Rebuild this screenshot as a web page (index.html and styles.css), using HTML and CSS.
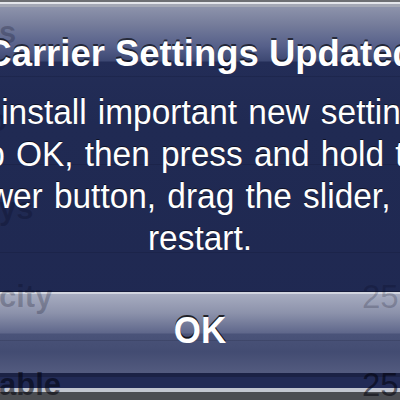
FILE: index.html
```html
<!DOCTYPE html>
<html>
<head>
<meta charset="utf-8">
<link rel="stylesheet" href="styles.css">
</head>
<body>
<div class="screen">
  <div class="topbar"></div>
  <div class="alert">
    <h1 class="title"><span>Carrier Settings Updated</span></h1>
    <p class="message"><span>To install important new settings,<br>tap OK, then press and hold the<br>power button, drag the slider, and<br>restart.</span></p>
    <div class="button"><span class="btn-label">OK</span></div>
    <div class="alert-foot"><div class="foot-line"></div></div>
  </div>
  <div class="ghost">
    <div class="row"><span class="label">s</span><span class="value"></span></div>
    <div class="row"><span class="label l2">o</span><span class="value"></span></div>
    <div class="row"><span class="label">ys</span><span class="value"></span></div>
    <div class="row"><span class="label">city</span><span class="value">25.</span></div>
    <div class="row"><span class="label dark">able</span><span class="value dark">25.</span></div>
  </div>
</div>
</body>
</html>
```
FILE: styles.css
```css
html, body {
  margin: 0;
  padding: 0;
  background: #4b4d52;
}
.screen {
  position: relative;
  width: 400px;
  height: 400px;
  overflow: hidden;
  background: #4b4d52;
  font-family: "Liberation Sans", Arial, sans-serif;
}
.topbar {
  height: 2px;
  background: #6d6f73;
}
.alert {
  border-top: 2px solid #e3e5ea;
  padding-top: 28px;
  background: linear-gradient(to bottom,
    #a4a8b5 0, #a4a8b5 3px,
    #8d93ab 3px, #767d9b 20px, #56608a 42px, #3d4873 57px,
    #232d57 58px, #202a53 120px, #1f2851 100%);
}
.title {
  margin: 0 -60px;
  font-size: 37px;
  line-height: 44px;
  font-weight: bold;
  color: #ffffff;
  text-align: center;
  white-space: nowrap;
  transform: scaleX(0.985);
  text-shadow: 0 -2px 0 rgba(0, 0, 0, 0.6);
  position: relative;
  z-index: 2;
}
.message {
  margin: 14.7px -60px 0;
  font-size: 35px;
  line-height: 42px;
  color: #ffffff;
  text-align: center;
  white-space: nowrap;
  word-spacing: 2px;
  transform: scaleX(0.955);
  text-shadow: 0 -1.5px 0 rgba(0, 0, 0, 0.6);
  position: relative;
  z-index: 2;
}
.button {
  margin-top: 32px;
  height: 81px;
  border-top: 1px solid #161c3c;
  border-bottom: 4px solid #1b2245;
  background: linear-gradient(to bottom,
    #d2d5df 0, #d2d5df 2px,
    #a7acc0 2px, #8c92ab 21px, #5f678b 41px,
    #4a5379 42px, #434c72 60px, #535b7f 81px);
  text-align: center;
}
.btn-label {
  display: block;
  font-size: 36px;
  line-height: 77px;
  font-weight: bold;
  color: #ffffff;
  transform: scaleX(0.97);
  text-shadow: 0 -2px 0 rgba(0, 0, 0, 0.75);
  position: relative;
  z-index: 2;
}
.alert-foot {
  height: 11px;
  background: #222b56;
}
.foot-line {
  position: relative;
  top: 11px;
  height: 4px;
  background: #c2c6d0;
}
.ghost {
  position: absolute;
  inset: 0;
  z-index: 1;
  pointer-events: none;
  display: flex;
  flex-direction: column;
  margin-top: -11px;
}
.row {
  flex: 0 0 87px;
  border-bottom: 1px solid rgba(0, 0, 20, 0.12);
  display: flex;
  align-items: center;
  justify-content: space-between;
}
.label {
  margin-left: -1px;
  font-size: 31px;
  font-weight: bold;
  color: rgba(0, 0, 20, 0.22);
}
.label.l2 {
  margin-left: -12px;
}
.value {
  margin-right: -46px;
  font-size: 33px;
  color: rgba(0, 0, 20, 0.2);
  width: 84px;
}
.label.dark, .value.dark {
  color: rgba(0, 0, 10, 0.55);
}
```
